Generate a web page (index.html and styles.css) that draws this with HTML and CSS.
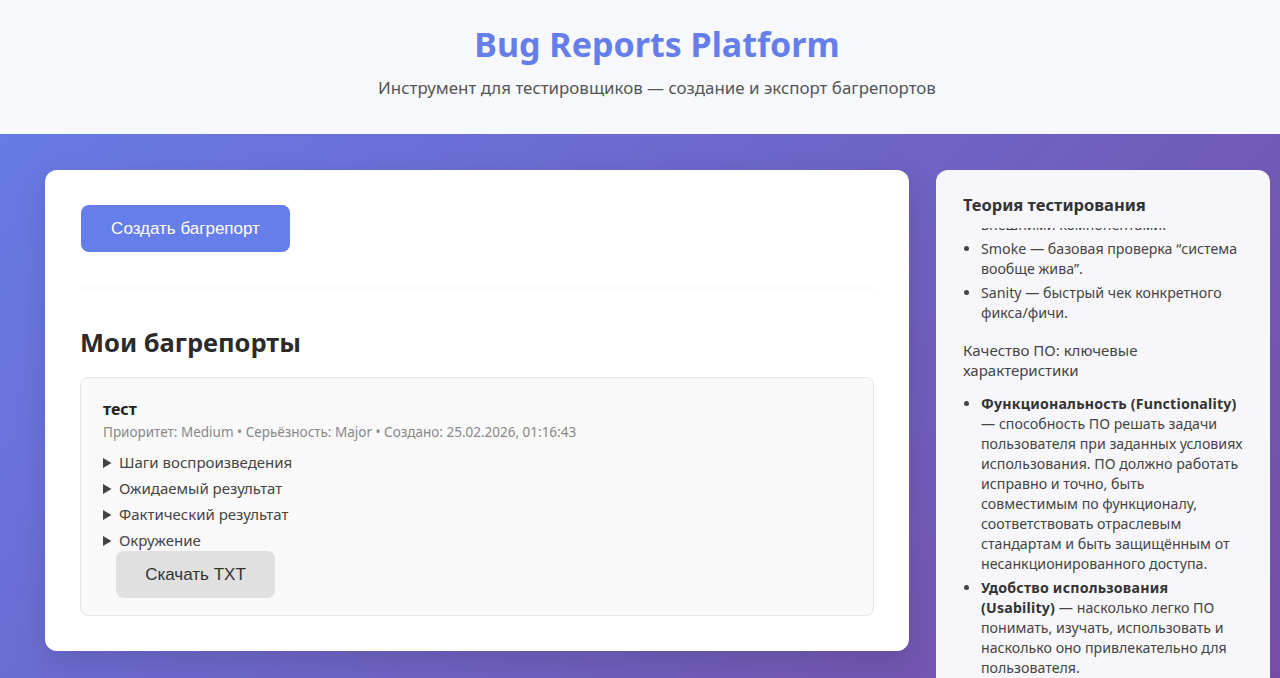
FILE: index.html
```html
<!DOCTYPE html>
<html lang="ru">
<head>
  <meta charset="UTF-8">
  <meta name="viewport" content="width=device-width, initial-scale=1.0">
  <title>Bug Reports Platform</title>
  <link rel="stylesheet" href="styles.css">
</head>
<body>
  <header class="site-header">
    <h1>Bug Reports Platform</h1>
    <p>Инструмент для тестировщиков — создание и экспорт багрепортов</p>
  </header>

  <div class="layout">
    <main class="main-card">
      <button class="btn-primary" id="create">Создать багрепорт</button>
      <div class="form-slot"></div>

      <h2 class="section-title">Мои багрепорты</h2>
      <div class="report">
        <div class="report-title">тест</div>
        <div class="report-meta">Приоритет: Medium • Серьёзность: Major • Создано: 25.02.2026, 01:16:43</div>
        <details><summary>Шаги воспроизведения</summary><p>1. Открыть страницу</p></details>
        <details><summary>Ожидаемый результат</summary><p>Страница открывается</p></details>
        <details><summary>Фактический результат</summary><p>Ошибка 500</p></details>
        <details><summary>Окружение</summary><p>Chrome, Windows 11</p></details>
        <button class="btn-secondary">Скачать TXT</button>
      </div>
    </main>

    <aside class="theory">
      <h3>Теория тестирования</h3>
      <div class="theory-body" id="theory">
        <ul>
          <li><b>Интеграционное</b> — проверка взаимодействия между модулями и внешними компонентами.</li>
          <li id="smoke">Smoke — базовая проверка “система вообще жива”.</li>
          <li>Sanity — быстрый чек конкретного фикса/фичи.</li>
        </ul>
        <p class="theory-sub">Качество ПО: ключевые характеристики</p>
        <ul>
          <li><b>Функциональность (Functionality)</b> — способность ПО решать задачи пользователя при заданных условиях использования. ПО должно работать исправно и точно, быть совместимым по функционалу, соответствовать отраслевым стандартам и быть защищённым от несанкционированного доступа.</li>
          <li><b>Удобство использования (Usability)</b> — насколько легко ПО понимать, изучать, использовать и насколько оно привлекательно для пользователя.</li>
          <li><b>Надёжность (Reliability)</b> — способность ПО сохранять работоспособность в заданных условиях в течение заданного времени.</li>
          <li><b>Производительность (Efficiency)</b> — время отклика и расход ресурсов при работе.</li>
        </ul>
      </div>
    </aside>
  </div>

  <script>
    // keep the theory panel scrolled to the smoke/sanity part
    const theory = document.getElementById('theory');
    theory.scrollTop = document.getElementById('smoke').offsetTop - 11;
  </script>
</body>
</html>
```

FILE: styles.css
```css
body {
  margin: 0;
  font-family: "Noto Sans", "Open Sans", sans-serif;
  background: linear-gradient(135deg, #667eea 0%, #764ba2 100%);
  min-height: 100vh;
  color: #333;
}
.site-header {
  background: #f7f8fc;
  text-align: center;
  padding: 22px 0 34px 34px;
}
.site-header h1 {
  margin: 0;
  font-size: 34px;
  font-weight: 700;
  color: #667eea;
  line-height: 44px;
}
.site-header p {
  margin: 10px 0 0;
  font-size: 16.9px;
  color: #555;
  line-height: 24px;
}
.layout {
  display: flex;
  align-items: flex-start;
  gap: 27px;
  padding: 36px 10px 0 45px;
}
.main-card {
  flex: 0 0 864px;
  box-sizing: border-box;
  background: #fff;
  border-radius: 12px;
  padding: 35px 35px 35px;
  box-shadow: 0 10px 30px rgba(0, 0, 0, 0.12);
}
.btn-primary, .btn-secondary {
  font-family: "Liberation Sans", Arial, sans-serif;
  font-size: 17px;
  border: none;
  border-radius: 8px;
  cursor: pointer;
}
.btn-primary {
  display: block;
  width: 209px;
  height: 47px;
  margin-left: 1px;
  background: #667eea;
  color: #fff;
}
.form-slot {
  height: 10px;
  margin: 32px 0 0;
  background: linear-gradient(#fff, #fcfcfe, #fff);
}
.section-title {
  margin: 31px 0 18px;
  font-size: 25.5px;
  font-weight: 700;
  color: #2b2b2b;
  line-height: 34px;
}
.report {
  background: #f9f9f9;
  border: 1px solid #e6e6e6;
  border-radius: 8px;
  padding: 19px 22px 17px;
}
.report-title {
  font-weight: 700;
  font-size: 16px;
  color: #222;
  line-height: 24px;
}
.report-meta {
  font-size: 13.5px;
  color: #888;
  margin: 2px 0 8px;
  line-height: 18px;
}
details summary {
  font-size: 15px;
  color: #444;
  line-height: 26px;
  cursor: pointer;
}
details p {
  margin: 0 0 6px 16px;
  font-size: 14px;
}
.btn-secondary {
  display: block;
  width: 159px;
  height: 47px;
  margin: -2px 0 0 13px;
  background: #e0e0e0;
  color: #333;
}
.theory {
  flex: 1;
  min-width: 0;
  background: #f7f7fb;
  border-radius: 12px;
  padding: 23px 26px 0 27px;
  height: 560px;
  display: flex;
  flex-direction: column;
}
.theory h3 {
  margin: 0 0 11px;
  font-size: 16.5px;
  font-weight: 700;
  color: #333;
  line-height: 24px;
}
.theory-body {
  position: relative;
  flex: 1;
  overflow-y: auto;
  scrollbar-width: none;
  font-size: 14.2px;
  line-height: 20px;
  color: #444;
}
.theory-body ul {
  margin: 0;
  padding-left: 18px;
}
.theory-body li {
  margin: 0 0 4px;
}
.theory-body b {
  color: #333;
  letter-spacing: 0.2px;
}
.theory-sub {
  margin: 17px 0 14px;
  font-size: 15px;
  color: #444;
}
```
